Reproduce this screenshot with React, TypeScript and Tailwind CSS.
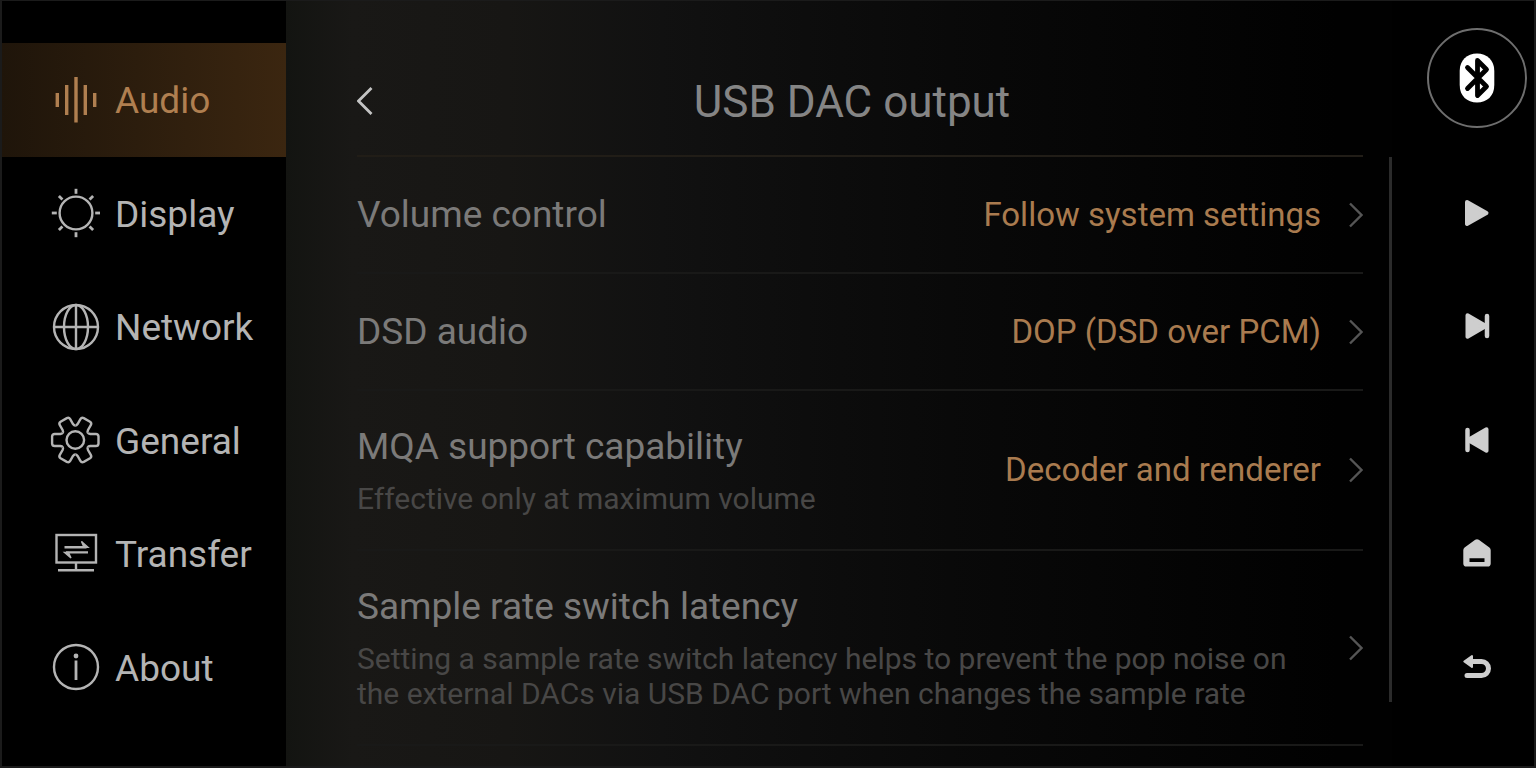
import { useState } from "react";
import type { ReactNode } from "react";
import { clsx } from "clsx";

const GEAR_TOOTH =
  "M-12.56-7.25Q-13.06-6.2-15-6L-20.6-6Q-23-6-23.2-3.6V3.6Q-23 6-20.6 6L-15 6Q-13.06 6.2-12.56 7.25";

function NavIcon({ children }: { children: ReactNode }) {
  return (
    <svg viewBox="0 0 50 50" className="size-[50px] shrink-0" fill="none" stroke="currentColor" strokeWidth="2.4" aria-hidden="true">
      {children}
    </svg>
  );
}

function AudioIcon() {
  return (
    <NavIcon>
      <path d="M7.3 18v14M16.7 10v30M26 2v45.5M35.3 10v30M44.7 18v14" strokeWidth="3.4" />
    </NavIcon>
  );
}

function DisplayIcon() {
  return (
    <NavIcon>
      <circle cx="26" cy="25" r="16.4" />
      {[0, 45, 90, 135, 180, 225, 270, 315].map((angle) => (
        <path key={angle} d="M45.2 25h5" strokeWidth="2.8" transform={`rotate(${angle} 26 25)`} />
      ))}
    </NavIcon>
  );
}

function NetworkIcon() {
  return (
    <NavIcon>
      <circle cx="26" cy="25" r="22" />
      <ellipse cx="26" cy="25" rx="12" ry="22" />
      <path d="M26 3v44M4 25h44" />
    </NavIcon>
  );
}

function GeneralIcon() {
  return (
    <NavIcon>
      <g transform="translate(25.3 25)">
        {[0, 60, 120, 180, 240, 300].map((angle) => (
          <path key={angle} d={GEAR_TOOTH} transform={`rotate(${angle})`} />
        ))}
        <circle r="8.8" />
      </g>
    </NavIcon>
  );
}

function TransferIcon() {
  return (
    <NavIcon>
      <rect x="6.5" y="6" width="39.5" height="27.5" />
      <path d="M26 33.5v7.5M8 41.2h36M14.5 18.2h22M38 23.4h-22" />
      <path d="M31.5 12.4L38 18.2h-4zM21 29L14.500 23.400h4z" fill="currentColor" strokeWidth="1.4" />
    </NavIcon>
  );
}

function AboutIcon() {
  return (
    <NavIcon>
      <circle cx="26" cy="25" r="22" />
      <path d="M26 18.5v19.5" strokeWidth="2.8" />
      <circle cx="26" cy="14" r="2.4" fill="currentColor" stroke="none" />
    </NavIcon>
  );
}

const NAV_ITEMS = [
  { label: "Audio", icon: <AudioIcon /> },
  { label: "Display", icon: <DisplayIcon /> },
  { label: "Network", icon: <NetworkIcon /> },
  { label: "General", icon: <GeneralIcon /> },
  { label: "Transfer", icon: <TransferIcon /> },
  { label: "About", icon: <AboutIcon /> },
];

const SETTINGS = [
  { title: "Volume control", value: "Follow system settings", height: "h-[117px]" },
  { title: "DSD audio", value: "DOP (DSD over PCM)", height: "h-[117px]" },
  {
    title: "MQA support capability",
    hint: "Effective only at maximum volume",
    value: "Decoder and renderer",
    height: "h-[160px]",
  },
  {
    title: "Sample rate switch latency",
    hint: "Setting a sample rate switch latency helps to prevent the pop noise on the external DACs via USB DAC port when changes the sample rate",
    height: "h-[195px]",
  },
];

const PLAYER_BUTTONS = [
  {
    label: "Play",
    icon: <path d="M6 5L25.500 16L6 27Z" strokeWidth="4" />,
  },
  {
    label: "Next",
    icon: (
      <>
        <path d="M6.5 5.3L25 16L6.5 26.7Z" strokeWidth="4" />
        <path d="M26 6v20" strokeWidth="4.5" />
      </>
    ),
  },
  {
    label: "Previous",
    icon: (
      <>
        <path d="M25.5 5.3L7 16L25.5 26.7Z" strokeWidth="4" />
        <path d="M6.5 6v20" strokeWidth="4.5" />
      </>
    ),
  },
  {
    label: "Home",
    icon: (
      <path
        d="M14.2 1.8Q16 .6 17.8 1.8L28.400 9.600Q29.700 10.600 29.700 12.200V25.500Q29.700 28.600 26.600 28.600H5.400Q2.300 28.600 2.300 25.500V12.200Q2.300 10.600 3.600 9.600ZM8.500 20.300v3.800h15v-3.800z"
        fillRule="evenodd"
        stroke="none"
      />
    ),
  },
  {
    label: "Back",
    icon: (
      <>
        <path d="M12 10.500H20.500A6.800 6.800 0 0 1 20.500 24.500H6" fill="none" strokeWidth="5" />
        <path d="M3.300 10.500L11 5V16Z" strokeWidth="2" />
      </>
    ),
  },
];

export default function App() {
  const [section, setSection] = useState("Audio");

  return (
    <div className="flex h-screen min-h-[768px] overflow-hidden border border-b-2 border-l-2 border-r-2 border-[#1b1b1b] bg-black font-['Roboto',sans-serif] text-[#b4b4b4]">
      <nav className="flex w-[284px] shrink-0 flex-col pt-[42px] pb-[42px]">
        {NAV_ITEMS.map((item) => (
          <button
            key={item.label}
            onClick={() => setSection(item.label)}
            className={clsx(
              "flex flex-1 items-center gap-[15px] pl-12 text-left text-[37px] leading-[42px]",
              section === item.label && "bg-linear-to-r from-[#1f150a] to-[#3b2610] text-[#b07f50]"
            )}
          >
            {item.icon}
            <span className="pt-[3px]">{item.label}</span>
          </button>
        ))}
      </nav>

      <main className="flex min-w-0 flex-1 bg-[linear-gradient(to_right,#131411,#191816_6%,#171614_20%,#111111_34%,#090909_60%,#010101_95%)]">
        <div className="min-w-0 flex-1 pl-[71px]">
          <header className="grid h-[156px] grid-cols-[1fr_auto_1fr] items-center border-b-2 border-[#211d17] pt-[46px] pr-4">
            <button aria-label="Go back" className="justify-self-start text-[#c4c4c4]">
              <svg viewBox="0 0 16 30" className="h-[30px] w-4" fill="none" stroke="currentColor" strokeWidth="2.8">
                <path d="M14.5 2L1.5 15L14.5 28" />
              </svg>
            </button>
            <h1 className="pt-0.5 text-[44px] leading-[52px] text-[#858585]">USB DAC output</h1>
          </header>

          {SETTINGS.map((row) => (
            <button
              key={row.title}
              className={clsx("flex w-full items-center border-b-2 border-[#191918] text-left", row.height)}
            >
              <span className="min-w-0 flex-1">
                <span className="block text-[37px] leading-[44px] text-[#7b7a79]">{row.title}</span>
                {row.hint && <span className="mt-3 block max-w-[940px] text-[30px] leading-[35px] text-[#484746]">{row.hint}</span>}
              </span>
              {row.value && <span className="text-[33px] leading-[44px] text-[#a97b4f]">{row.value}</span>}
              <svg viewBox="0 0 14 26" className="ml-7 h-[26px] w-[14px] shrink-0" fill="none" stroke="#555" strokeWidth="2.4">
                <path d="M1 1.5L12.5 13L1 24.5" />
              </svg>
            </button>
          ))}
        </div>
        <div className="mt-[156px] mb-[64px] ml-[26px] w-[3px] bg-[#2b2b2b]" />
      </main>

      <aside className="flex w-[142px] shrink-0 flex-col pt-[27px] pb-[42px]">
        <button
          aria-label="Bluetooth"
          className="mr-[7px] flex size-[100px] items-center justify-center self-end rounded-full border-2 border-[#6e6e6e]"
        >
          <svg viewBox="0 0 36 50" className="h-[50px] w-9" aria-hidden="true">
            <path d="M18 .5C28 .5 35.3 7 35.3 18V32C35.3 43 28 49.5 18 49.5S.7 43 .7 32V18C.7 7 8 .5 18 .5Z" fill="#fff" />
            <path d="M8.500 14.500L27.500 33.500L18.500 42.500V7.500L27.500 16.500L8.500 35.500" fill="none" stroke="#000" strokeWidth="4.8" strokeLinejoin="round" strokeLinecap="round" />
          </svg>
        </button>
        <div className="mt-7 flex flex-1 flex-col">
          {PLAYER_BUTTONS.map((item) => (
            <button key={item.label} aria-label={item.label} className="flex flex-1 items-center justify-center pl-7">
              <svg viewBox="0 0 32 32" className="size-8" fill="#cecece" stroke="#cecece" strokeLinejoin="round" strokeLinecap="round">
                {item.icon}
              </svg>
            </button>
          ))}
        </div>
      </aside>
    </div>
  );
}
